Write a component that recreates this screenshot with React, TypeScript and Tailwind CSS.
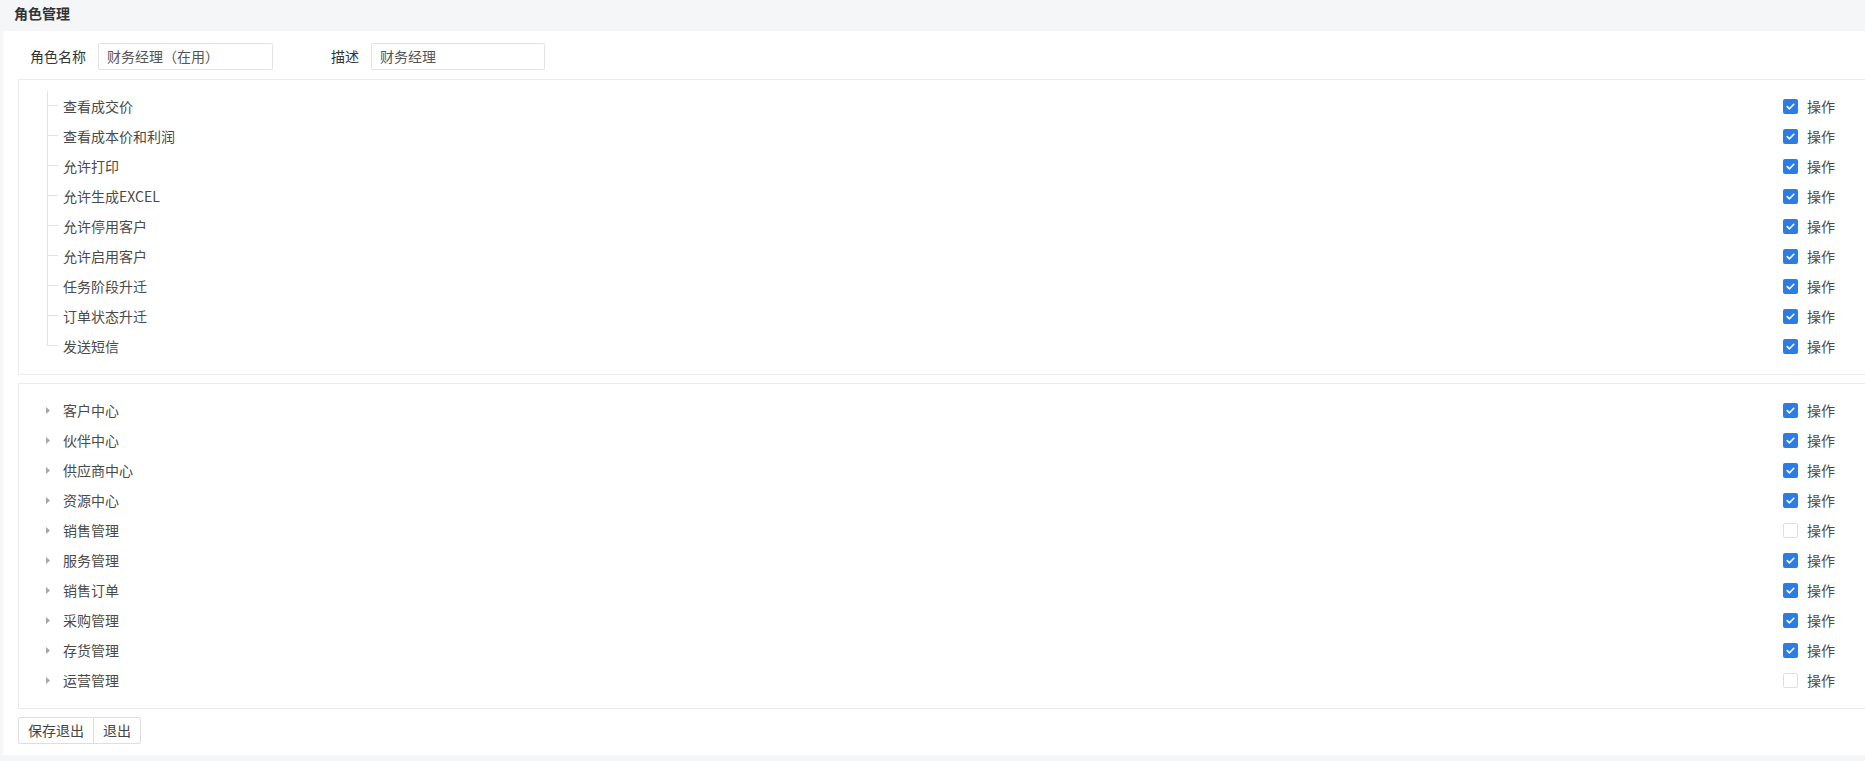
import React from "react";

const font = { fontFamily: '"Noto Sans CJK SC", "Noto Sans", sans-serif' };

const perms1 = [
  "查看成交价",
  "查看成本价和利润",
  "允许打印",
  "允许生成EXCEL",
  "允许停用客户",
  "允许启用客户",
  "任务阶段升迁",
  "订单状态升迁",
  "发送短信",
];

const perms2: [string, boolean][] = [
  ["客户中心", true],
  ["伙伴中心", true],
  ["供应商中心", true],
  ["资源中心", true],
  ["销售管理", false],
  ["服务管理", true],
  ["销售订单", true],
  ["采购管理", true],
  ["存货管理", true],
  ["运营管理", false],
];

function Check({ checked }: { checked: boolean }) {
  if (checked) {
    return (
      <span className="w-[15px] h-[15px] rounded-[2px] bg-[#2b7de3] flex items-center justify-center">
        <svg width="11" height="11" viewBox="0 0 11 11">
          <path d="M2.2 5.6 L4.5 7.8 L8.8 3.3" stroke="#fff" strokeWidth="1.6" fill="none" strokeLinecap="round" strokeLinejoin="round" />
        </svg>
      </span>
    );
  }
  return <span className="w-[15px] h-[15px] rounded-[2px] bg-white border border-[#dcdfe6]" />;
}

function RightOp({ checked }: { checked: boolean }) {
  return (
    <div className="ml-auto flex items-center pr-[30px]">
      <Check checked={checked} />
      <span className="ml-[9px] text-[14px] text-[#4a4a4a] leading-[20px] -mt-[1px]">操作</span>
    </div>
  );
}

export default function App() {
  return (
    <div className="min-h-screen bg-[#f5f6f8]" style={font}>
      <div className="h-[31px] pl-[14px] pt-[3px] text-[14px] leading-[20px] font-bold text-[#333]">角色管理</div>
      <div className="ml-[3px] bg-white flex flex-col pb-[11px]">
        <div className="mt-[12px] pl-[27px] flex items-center">
          <span className="text-[14px] text-[#333]">角色名称</span>
          <div className="ml-[12px] w-[175px] h-[27px] border border-[#e3e3e3] rounded-[2px] flex items-center pl-[8px] text-[14px] text-[#555]">
            财务经理（在用）
          </div>
          <span className="ml-[58px] text-[14px] text-[#333]">描述</span>
          <div className="ml-[12px] w-[174px] h-[27px] border border-[#e3e3e3] rounded-[2px] flex items-center pl-[8px] text-[14px] text-[#555]">
            财务经理
          </div>
        </div>

        <div className="mt-[9px] ml-[15px] border border-r-0 border-[#ebebeb] pt-[11px] pb-[13px]">
          {perms1.map((p, i) => {
            const last = i === perms1.length - 1;
            return (
              <div key={p} className="h-[30px] flex items-stretch pl-[28px]">
                <div className="w-[11px] flex flex-col">
                  <div className="h-[15px] border-l border-b border-[#e2e2e2]" />
                  <div className={"flex-1 " + (last ? "" : "border-l border-[#e2e2e2]")} />
                </div>
                <div className="flex-1 flex items-center">
                  <span className="ml-[5px] text-[14px] text-[#4a4a4a] leading-[20px] -mt-[1px]">{p}</span>
                  <RightOp checked={true} />
                </div>
              </div>
            );
          })}
        </div>

        <div className="mt-[8px] ml-[15px] border border-r-0 border-[#ebebeb] pt-[11px] pb-[13px]">
          {perms2.map(([p, c]) => (
            <div key={p} className="h-[30px] flex items-center pl-[27px]">
              <svg width="4" height="7" viewBox="0 0 4 7">
                <path d="M0 0 L4 3.5 L0 7 Z" fill="#a6a6a6" />
              </svg>
              <span className="ml-[13px] text-[14px] text-[#4a4a4a] leading-[20px] -mt-[1px]">{p}</span>
              <RightOp checked={c} />
            </div>
          ))}
        </div>

        <div className="mt-[8px] ml-[15px] flex">
          <div className="flex border border-[#dedede] rounded-[2px] h-[27px]">
            <span className="px-[9px] flex items-center text-[14px] text-[#444] border-r border-[#dedede]">保存退出</span>
            <span className="px-[9px] flex items-center text-[14px] text-[#444]">退出</span>
          </div>
        </div>
      </div>
    </div>
  );
}
